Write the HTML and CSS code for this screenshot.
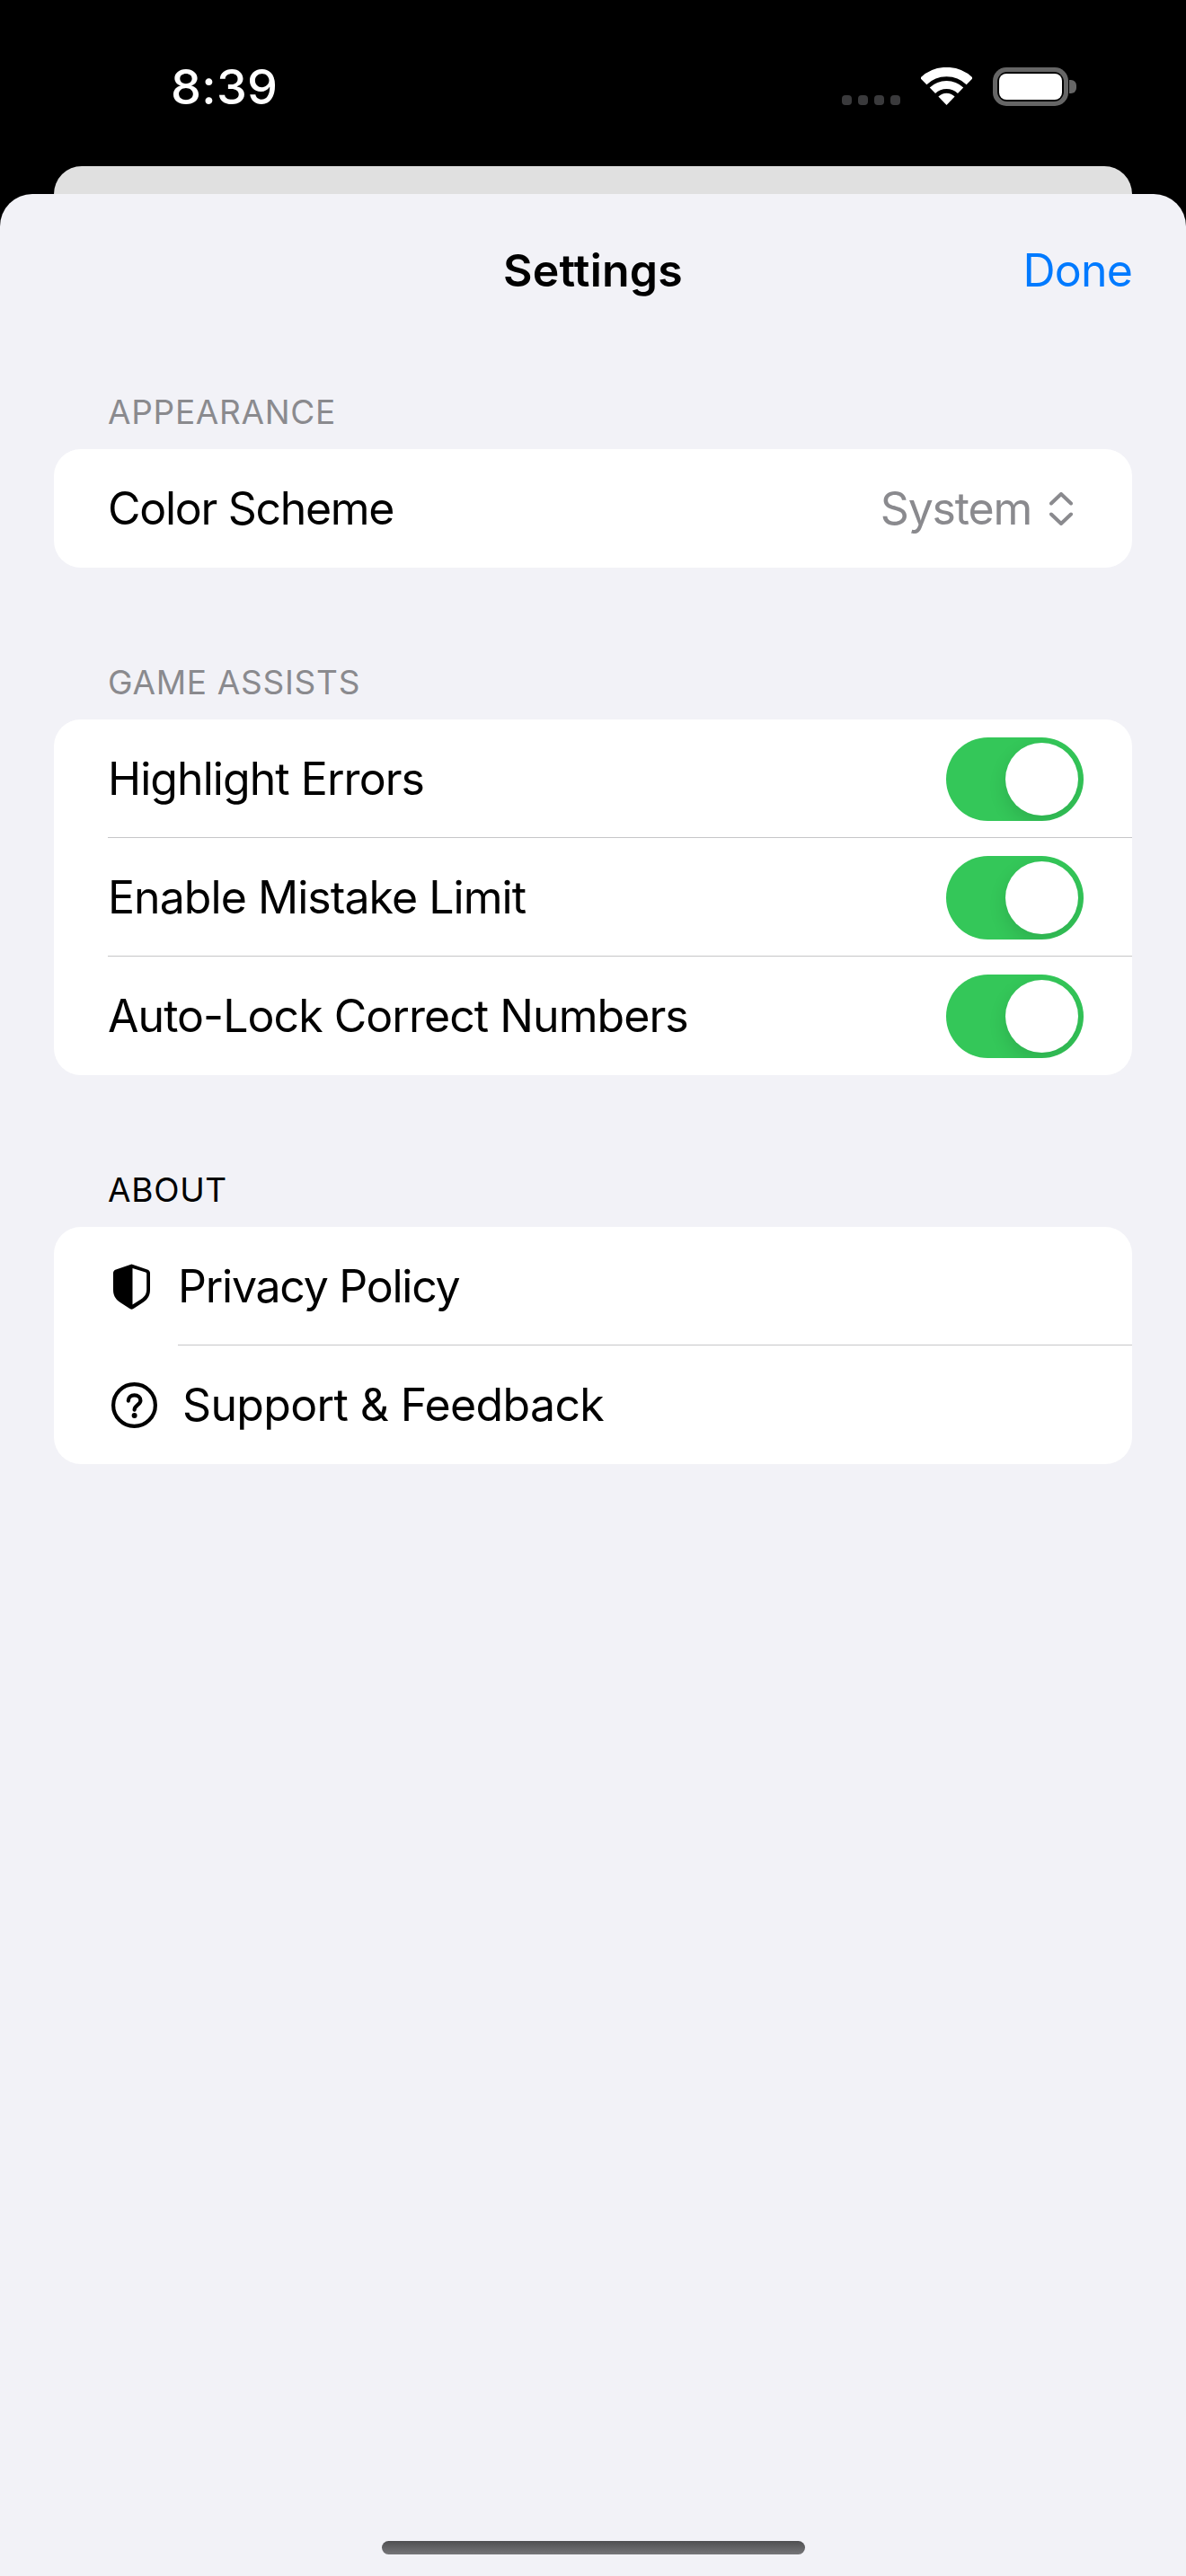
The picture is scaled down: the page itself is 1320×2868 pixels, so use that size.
FILE: index.html
```html
<!DOCTYPE html>
<html lang="en">
<head>
<meta charset="utf-8">
<title>Settings</title>
<link rel="stylesheet" href="styles.css">
</head>
<body>
<div class="phone">
  <header class="status-bar">
    <span class="clock">8:39</span>
    <div class="status-icons">
      <div class="signal"><i></i><i></i><i></i><i></i></div>
      <svg class="wifi" viewBox="0 0 57 42" aria-hidden="true">
        <path d="M2.7 15.6a37 37 0 0 1 51.6 0" fill="none" stroke="#fff" stroke-width="10.5"/>
        <path d="M12.9 25.8a22.4 22.4 0 0 1 31.2 0" fill="none" stroke="#fff" stroke-width="9"/>
        <path d="M28.5 42L19.4 32.6a12.8 12.8 0 0 1 18.2 0Z" fill="#fff"/>
      </svg>
      <div class="battery"><div class="battery-level"></div></div>
    </div>
  </header>
  <div class="back-sheet"></div>
  <main class="sheet">
    <nav class="nav">
      <span></span>
      <h1 class="nav-title">Settings</h1>
      <a class="nav-done">Done</a>
    </nav>

    <section class="group">
      <h2 class="group-title">APPEARANCE</h2>
      <div class="card">
        <div class="row">
          <div class="row-body">
            <span class="label label-scheme">Color Scheme</span>
            <div class="picker">
              <span class="picker-value">System</span>
              <svg class="chevrons" viewBox="0 0 26 37" aria-hidden="true">
                <path d="M2 12.5L13 2L24 12.5M2 24.5L13 35L24 24.5" fill="none" stroke="#8a8a8e" stroke-width="4" stroke-linecap="round" stroke-linejoin="round"/>
              </svg>
            </div>
          </div>
        </div>
      </div>
    </section>

    <section class="group">
      <h2 class="group-title">GAME ASSISTS</h2>
      <div class="card">
        <div class="row">
          <div class="row-body">
            <span class="label">Highlight Errors</span>
            <div class="toggle"><div class="knob"></div></div>
          </div>
        </div>
        <div class="row">
          <div class="row-body">
            <span class="label">Enable Mistake Limit</span>
            <div class="toggle"><div class="knob"></div></div>
          </div>
        </div>
        <div class="row">
          <div class="row-body">
            <span class="label">Auto-Lock Correct Numbers</span>
            <div class="toggle"><div class="knob"></div></div>
          </div>
        </div>
      </div>
    </section>

    <section class="group">
      <h2 class="group-title group-title-dark">ABOUT</h2>
      <div class="card">
        <div class="row row-icon">
          <svg class="icon icon-shield" viewBox="0 0 41 51" aria-hidden="true">
            <path d="M20.5 0.5L38 6.4C39.8 7 41 8.3 41 10.2V29C41 36.5 37.4 40.6 31 44.6L22.5 50C21 51 20 51 18.5 50L10 44.6C3.6 40.6 0 36.5 0 29V10.2C0 8.3 1.2 7 3 6.4Z" fill="#000"/>
            <path d="M21.5 5V45.6L29 40.8C34.6 37.3 37.2 34.2 37.2 28.5V11C37.2 10.2 36.8 9.7 36 9.4Z" fill="#fff"/>
          </svg>
          <div class="row-body">
            <span class="label label-privacy">Privacy Policy</span>
          </div>
        </div>
        <div class="row row-icon">
          <svg class="icon icon-help" viewBox="0 0 51 51" aria-hidden="true">
            <circle cx="25.5" cy="25.5" r="23.4" fill="none" stroke="#000" stroke-width="4.2"/>
            <path d="M18.8 20.6C18.9 16.6 21.6 14.4 25.6 14.4C29.7 14.4 32.4 16.8 32.4 20.2C32.4 25 26 25.4 25.6 30.6" fill="none" stroke="#000" stroke-width="4.2" stroke-linecap="round"/>
            <circle cx="25.6" cy="37" r="3" fill="#000"/>
          </svg>
          <div class="row-body body-support">
            <span class="label label-support">Support &amp; Feedback</span>
          </div>
        </div>
      </div>
    </section>

    <div class="home-indicator"></div>
  </main>
</div>
</body>
</html>
```
FILE: styles.css
```css
* {
  box-sizing: border-box;
}

html,
body {
  margin: 0;
  background: #000;
}

.phone {
  width: 1320px;
  height: 2868px;
  display: flex;
  flex-direction: column;
  overflow: hidden;
  font-family: Inter, "Liberation Sans", sans-serif;
  color: #000;
}

/* Status bar */
.status-bar {
  height: 185px;
  flex: none;
  display: flex;
  justify-content: space-between;
  align-items: flex-start;
  padding: 66px 131px 0 190px;
}

.clock {
  color: #fff;
  font-size: 54px;
  line-height: 62px;
  font-weight: 500;
  letter-spacing: 0.3px;
}

.status-icons {
  display: flex;
  align-items: flex-end;
  padding-top: 9px;
}

.signal {
  display: flex;
  gap: 7px;
  margin-right: 23px;
  padding-bottom: 1px;
}

.signal i {
  width: 11px;
  height: 11px;
  border-radius: 4px;
  background: #3a3a3c;
}

.wifi {
  width: 57px;
  height: 42px;
  margin-right: 23px;
  margin-bottom: 1px;
}

.battery {
  position: relative;
  width: 84px;
  height: 43px;
  padding: 7px;
  border-radius: 15px;
  background: #666;
}

.battery::before {
  content: "";
  position: absolute;
  inset: 5px;
  border-radius: 11px;
  background: #000;
}

.battery::after {
  content: "";
  position: absolute;
  left: 85px;
  top: 14px;
  width: 8px;
  height: 15px;
  border-radius: 0 6px 6px 0;
  background: #666;
}

.battery-level {
  position: relative;
  height: 29px;
  border-radius: 8px;
  background: #fff;
}

/* Stacked sheets */
.back-sheet {
  height: 31px;
  flex: none;
  margin: 0 60px;
  border-radius: 34px 34px 0 0;
  background: #e0e0e0;
}

.sheet {
  position: relative;
  flex: 1;
  padding: 0 60px;
  border-radius: 36px 36px 0 0;
  background: #f2f2f7;
}

.nav {
  height: 115px;
  display: grid;
  grid-template-columns: 1fr auto 1fr;
  align-items: end;
}

.nav-title {
  margin: 0;
  font-size: 50px;
  line-height: 60px;
  font-weight: 600;
  letter-spacing: 0.2px;
}

.nav-done {
  justify-self: end;
  color: #007aff;
  font-size: 50px;
  line-height: 60px;
  letter-spacing: -0.8px;
}

/* Grouped lists */
.group {
  margin-top: 105px;
}

.group-title {
  margin: 0 0 18px 60px;
  color: #8a8a8e;
  font-size: 37px;
  line-height: 46px;
  font-weight: 400;
  letter-spacing: 0.7px;
}

.group-title-dark {
  color: #000;
}

.card {
  border-radius: 30px;
  background: #fff;
  overflow: hidden;
}

.row {
  height: 132px;
  display: flex;
  align-items: center;
  padding-left: 60px;
}

.row-body {
  flex: 1;
  height: 100%;
  display: flex;
  align-items: center;
  justify-content: space-between;
  padding-right: 54px;
  border-bottom: 1px solid #c6c6c8;
}

.row:last-child .row-body {
  border-bottom: 0;
}

.label {
  font-size: 50px;
  line-height: 60px;
  letter-spacing: -0.95px;
}

.label-scheme {
  letter-spacing: -1.3px;
}

.label-privacy {
  letter-spacing: -1.25px;
}

.label-support {
  letter-spacing: -0.65px;
}

/* Value picker */
.picker {
  display: flex;
  align-items: center;
  gap: 20px;
  margin-right: 12px;
}

.picker-value {
  color: #8a8a8e;
  font-size: 50px;
  line-height: 60px;
  letter-spacing: -1.2px;
}

.chevrons {
  width: 26px;
  height: 37px;
}

/* Switches */
.toggle {
  position: relative;
  width: 153px;
  height: 93px;
  margin-top: 1px;
  border-radius: 47px;
  background: #34c759;
  overflow: hidden;
}

.knob {
  position: absolute;
  top: 6px;
  right: 6px;
  width: 81px;
  height: 81px;
  border-radius: 50%;
  background: #fff;
  box-shadow: 0 8px 20px rgba(0, 0, 0, 0.12);
}

/* Rows with a leading icon */
.row-icon {
  padding-left: 64px;
}

.icon {
  flex: none;
}

.icon-shield {
  width: 41px;
  height: 51px;
  margin: 0 31px 0 2px;
}

.icon-help {
  width: 51px;
  height: 51px;
  margin: 0 23px 0 0;
}

.body-support {
  padding-left: 5px;
}

.home-indicator {
  position: absolute;
  left: 425px;
  bottom: 24px;
  width: 471px;
  height: 15px;
  border-radius: 8px;
  background: linear-gradient(#4f4f51, #767679);
}
```
